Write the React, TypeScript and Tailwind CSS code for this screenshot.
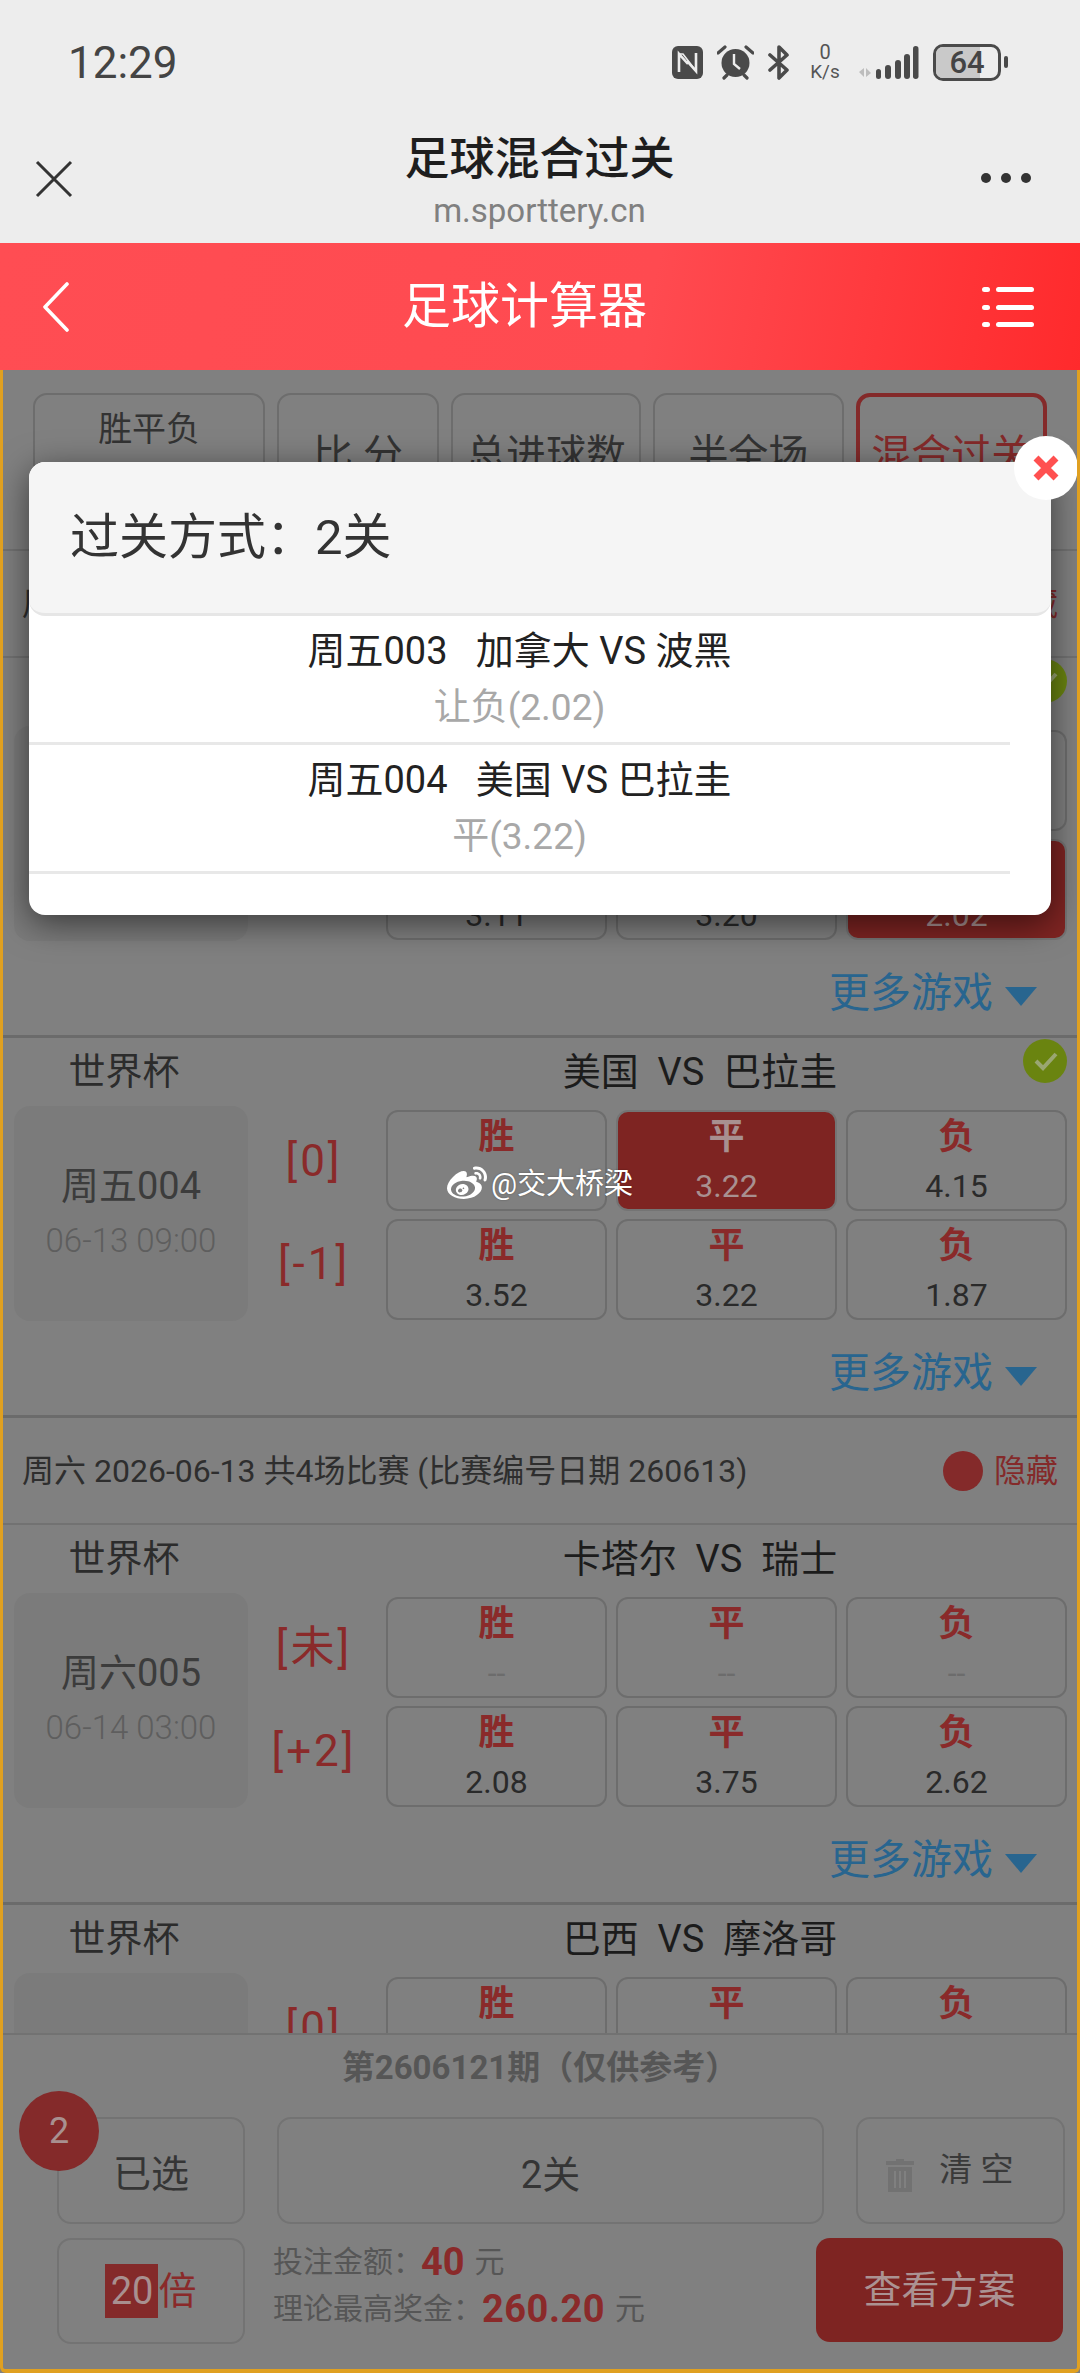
import React from "react";
import { FaWeibo } from "react-icons/fa";

const FONT = "font-['Roboto','Noto_Sans_CJK_SC',sans-serif]";

type Cell = { l: string; v: string; on?: boolean };
type Row = { label: string; cells: Cell[] };
type Match = { code: string; time: string; teams: string; rows: Row[]; checked?: boolean };

const tri = (a: string, b: string, c: string, sel = -1): Cell[] => [
  { l: "胜", v: a, on: sel === 0 },
  { l: "平", v: b, on: sel === 1 },
  { l: "负", v: c, on: sel === 2 },
];

const m1: Match = {
  code: "",
  time: "",
  teams: "加拿大  VS  波黑",
  checked: true,
  rows: [
    { label: "", cells: tri("", "", "") },
    { label: "", cells: tri("3.11", "3.20", "2.02", 2) },
  ],
};
const m2: Match = {
  code: "周五004",
  time: "06-13 09:00",
  teams: "美国  VS  巴拉圭",
  checked: true,
  rows: [
    { label: "[0]", cells: tri("", "3.22", "4.15", 1) },
    { label: "[-1]", cells: tri("3.52", "3.22", "1.87") },
  ],
};
const m3: Match = {
  code: "周六005",
  time: "06-14 03:00",
  teams: "卡塔尔  VS  瑞士",
  rows: [
    { label: "[未]", cells: tri("--", "--", "--") },
    { label: "[+2]", cells: tri("2.08", "3.75", "2.62") },
  ],
};
const m4: Match = {
  code: "",
  time: "",
  teams: "巴西  VS  摩洛哥",
  rows: [
    { label: "[0]", cells: tri("", "", "") },
    { label: "", cells: tri("", "", "") },
  ],
};

function Nfc() {
  return (
    <svg width="31" height="33" viewBox="0 0 31 33">
      <rect width="31" height="33" rx="6" fill="#4a4a4a" />
      <path d="M7 26V8l9 10 M24 7v18l-9-10" fill="none" stroke="#ededed" strokeWidth="2.6" />
      <path d="M7 8h4l13 17" fill="none" stroke="#ededed" strokeWidth="1.6" />
    </svg>
  );
}
function Alarm() {
  return (
    <svg width="37" height="35" viewBox="0 0 37 35">
      <circle cx="18.5" cy="18" r="14" fill="#4a4a4a" />
      <path d="M17 9v10l6 5" fill="none" stroke="#ededed" strokeWidth="2.4" />
      <path d="M1 8l7-6 M36 8l-7-6 M7 33l3-3 M30 33l-3-3" stroke="#4a4a4a" strokeWidth="3.2" strokeLinecap="round" />
    </svg>
  );
}
function Bluetooth() {
  return (
    <svg width="22" height="35" viewBox="0 0 22 35">
      <path d="M2 10l17 15-8 8V2l8 8L2 25" fill="none" stroke="#4a4a4a" strokeWidth="3.6" strokeLinejoin="round" strokeLinecap="round" />
    </svg>
  );
}
function Signal() {
  return (
    <svg width="62" height="35" viewBox="0 0 62 35">
      <path d="M2 27l5-4v9z M9 23l5 5-5 4z" fill="#bdbdbd" />
      <rect x="19" y="24" width="5" height="10" rx="2.5" fill="#4a4a4a" />
      <rect x="28" y="20" width="6" height="14" rx="3" fill="#4a4a4a" />
      <rect x="38" y="15" width="6" height="19" rx="3" fill="#4a4a4a" />
      <rect x="47" y="9" width="6" height="25" rx="3" fill="#4a4a4a" />
      <rect x="56" y="1" width="5.5" height="33" rx="2.7" fill="#4a4a4a" />
    </svg>
  );
}
function Battery() {
  return (
    <div className="flex items-center gap-[3px]">
      <div className="relative flex h-[37px] w-[68px] items-center justify-center overflow-hidden rounded-[10px] border-[3px] border-[#4a4a4a]">
        <div className="absolute inset-y-0 left-0 w-[44px] bg-[#c9c9c9]" />
        <span className="relative text-[31px] font-medium leading-none text-[#444]">64</span>
      </div>
      <div className="h-[12px] w-[4px] rounded-full bg-[#4a4a4a]" />
    </div>
  );
}

function BrowserBar() {
  return (
    <div className="relative h-[243px] shrink-0 bg-[#ededed]">
      <div className="flex h-[124px] items-center pl-[68px] pr-[72px]">
        <span className="mt-[2px] text-[44px] leading-none text-[#444]">12:29</span>
        <div className="ml-auto flex items-center gap-[14px]">
          <Nfc />
          <Alarm />
          <Bluetooth />
          <div className="ml-[3px] flex w-[36px] flex-col items-center text-[#555]">
            <span className="text-[20px] leading-[20px]">0</span>
            <span className="text-[19px] leading-[20px]">K/s</span>
          </div>
          <Signal />
          <Battery />
        </div>
      </div>
      <div className="flex items-start pl-[35px] pr-[49px]">
        <svg width="38" height="38" viewBox="0 0 38 38" className="mt-[36px]">
          <path d="M2 2l34 34 M36 2L2 36" stroke="#333" strokeWidth="3" />
        </svg>
        <div className="flex flex-1 flex-col items-center pl-[25px]">
          <span className="mt-[11px] text-[45px] font-medium leading-[50px] text-[#1e1e1e]">足球混合过关</span>
          <span className="mt-[4px] text-[33px] leading-[44px] text-[#808080]">m.sporttery.cn</span>
        </div>
        <div className="mt-[49px] flex w-[50px] justify-between">
          <i className="h-[10px] w-[10px] rounded-full bg-[#333]" />
          <i className="h-[10px] w-[10px] rounded-full bg-[#333]" />
          <i className="h-[10px] w-[10px] rounded-full bg-[#333]" />
        </div>
      </div>
    </div>
  );
}

function RedBar() {
  return (
    <div className="flex h-[127px] shrink-0 items-center bg-[linear-gradient(100deg,#ff4d53_0%,#ff4a50_60%,#ff2a2c_100%)] pl-[42px] pr-[46px]">
      <svg width="28" height="50" viewBox="0 0 28 50">
        <path d="M25 2L3 25l22 23" fill="none" stroke="#fff" strokeWidth="3.6" strokeLinecap="round" strokeLinejoin="round" />
      </svg>
      <span className="flex-1 pr-[3px] text-center text-[49px] font-normal leading-none text-white">足球计算器</span>
      <svg width="52" height="44" viewBox="0 0 52 44">
        <g fill="#fff">
          <rect x="0" y="2" width="8" height="5" rx="2.5" />
          <rect x="14" y="2" width="38" height="5" rx="2.5" />
          <rect x="0" y="20" width="8" height="5" rx="2.5" />
          <rect x="14" y="20" width="38" height="5" rx="2.5" />
          <rect x="0" y="37" width="8" height="5" rx="2.5" />
          <rect x="14" y="37" width="38" height="5" rx="2.5" />
        </g>
      </svg>
    </div>
  );
}

function Tabs() {
  const base = "flex h-[143px] flex-col items-center rounded-[14px] border-2 border-[#6d6d6d] text-[#333]";
  return (
    <div className="flex h-[181px] gap-[12px] border-b-2 border-[#727272] pl-[33px] pr-[33px] pt-[23px]">
      <div className={`${base} w-[233px] pt-[14px] text-[34px] leading-[40px]`}>胜平负</div>
      <div className={`${base} w-[162px] pt-[38px] text-[40px] leading-[44px]`}>比 分</div>
      <div className={`${base} w-[191px] pt-[38px] text-[40px] leading-[44px]`}>总进球数</div>
      <div className={`${base} w-[191px] pt-[38px] text-[40px] leading-[44px]`}>半全场</div>
      <div className="flex h-[143px] w-[192px] flex-col items-center rounded-[14px] border-[4px] border-[#842a2a] pt-[36px] text-[40px] leading-[44px] text-[#842a2a]">混合过关</div>
    </div>
  );
}

function DayHeader({ text }: { text: string }) {
  return (
    <div className="flex h-[107px] items-center border-b-2 border-[#727272] pl-[22px] pr-[22px]">
      <span className="text-[32px] leading-none text-[#2e2e2e]">{text}</span>
      <span className="ml-auto h-[40px] w-[40px] rounded-full bg-[#842a2a]" />
      <span className="ml-[11px] text-[32px] leading-none text-[#842a2a]">隐藏</span>
    </div>
  );
}

function OddsCell({ c }: { c: Cell }) {
  const box = c.on ? "bg-[#7e2422] border-[#747474]" : "border-[#6d6d6d]";
  const lab = c.on ? "text-[#a89090]" : "text-[#8a2a2a]";
  const val = c.on ? "text-[#a89090]" : c.v === "--" ? "text-[#6c6c6c]" : "text-[#2a2a2a]";
  return (
    <div className={`flex flex-col items-center rounded-[12px] border-2 pt-[7px] ${box}`}>
      <span className={`text-[36px] font-bold leading-[36px] ${lab}`}>{c.l}</span>
      <span className={`mt-[15px] h-[32px] text-[32px] leading-[32px] ${val}`}>{c.v}</span>
    </div>
  );
}

function MatchBlock({ m }: { m: Match }) {
  return (
    <div className="relative h-[380px] border-b-[3px] border-[#6b6b6b]">
      <div className="flex h-[68px] items-center">
        <span className="w-[248px] text-center text-[37px] leading-none text-[#2c2c2c]">世界杯</span>
        <span className="ml-[72px] flex-1 whitespace-pre text-center text-[38px] leading-none text-[#1c1c1c]">{m.teams}</span>
      </div>
      {m.checked && (
        <svg width="44" height="44" viewBox="0 0 44 44" className="absolute right-[13px] top-[1px]">
          <circle cx="22" cy="22" r="22" fill="#6a8410" />
          <path d="M13 22l7 7 13-14" fill="none" stroke="#9aa672" strokeWidth="4" />
        </svg>
      )}
      <div className="flex pl-[14px]">
        <div className="flex h-[215px] w-[234px] flex-col items-center rounded-[16px] bg-[#7b7b7b] pt-[60px]">
          <span className="h-[40px] text-[38px] leading-[40px] text-[#3c3c3c]">{m.code}</span>
          <span className="mt-[16px] text-[33px] font-light leading-[38px] text-[#5e5e5e]">{m.time}</span>
        </div>
        <div className="flex w-[138px] flex-col pt-[4px] text-[44px] leading-none tracking-[3px] text-[#8a2a2a]">
          <div className="flex h-[101px] items-center justify-center pr-[6px]">{m.rows[0].label}</div>
          <div className="flex h-[100px] items-center justify-center pr-[6px] pt-[6px]">{m.rows[1].label}</div>
        </div>
        <div className="mt-[4px] grid h-[210px] w-[681px] grid-cols-3 grid-rows-2 gap-x-[9px] gap-y-[8px]">
          {m.rows.flatMap((r) => r.cells).map((c, i) => (
            <OddsCell key={i} c={c} />
          ))}
        </div>
      </div>
      <div className="mt-[32px] flex h-[40px] items-center justify-end gap-[12px] pr-[43px]">
        <span className="text-[41px] leading-none text-[#28658f]">更多游戏</span>
        <span className="mt-[6px] h-0 w-0 border-x-[16px] border-t-[19px] border-x-transparent border-t-[#28658f]" />
      </div>
    </div>
  );
}

function Footer() {
  const box = "rounded-[14px] border-2 border-[#737373] flex items-center justify-center";
  return (
    <div className="absolute inset-x-0 bottom-0 h-[340px] border-t-2 border-[#727272] bg-[#808080] pl-[57px] pr-[15px]">
      <div className="flex h-[64px] items-center justify-center pr-[42px] text-[33px] font-bold leading-none text-[#565656]">
        第2606121期（仅供参考）
      </div>
      <div className="mt-[18px] flex h-[107px]">
        <div className={`${box} w-[188px] text-[38px] text-[#353535]`}>
          <span className="mt-[8px]">已选</span>
        </div>
        <div className={`${box} ml-[32px] w-[548px] text-[38px] text-[#353535]`}>
          <span className="mt-[10px]">2关</span>
        </div>
        <div className={`${box} ml-[32px] w-[209px] !justify-start gap-[25px] pl-[28px]`}>
          <svg width="28" height="34" viewBox="0 0 28 34" className="mt-[8px]">
            <path d="M10 3V1h8v2h10v4H0V3z M2 9h24v25H2z" fill="#727272" />
            <path d="M9 13v17 M14 13v17 M19 13v17" stroke="#808080" strokeWidth="2" />
          </svg>
          <span className="-mt-[3px] whitespace-pre text-[33px] leading-none text-[#3a3a3a]">清 空</span>
        </div>
      </div>
      <div className="mt-[14px] flex h-[106px]">
        <div className={`${box} w-[188px] text-[38px] leading-none text-[#8a2a2a]`}>
          <span className="flex h-[54px] w-[53px] items-center justify-center bg-[#842a2a] text-[#a89090]">20</span>
          <span>倍</span>
        </div>
        <div className="ml-[28px] -mt-[11px] flex flex-1 flex-col justify-center text-[30px] leading-none text-[#565656]">
          <div className="flex h-[47px] items-center">
            投注金额：
            <b className="-ml-[2px] text-[38px] font-bold text-[#8a2a2a]">40</b>
            <span className="ml-[10px]">元</span>
          </div>
          <div className="flex h-[47px] items-center">
            理论最高奖金：
            <b className="-ml-[1px] text-[38px] font-bold tracking-[0.5px] text-[#8a2a2a]">260.20</b>
            <span className="ml-[10px]">元</span>
          </div>
        </div>
        <div className="mr-[2px] flex h-[104px] w-[247px] items-center justify-center rounded-[14px] bg-[#7e2422] text-[38px] leading-none text-[#ab9292]">
          查看方案
        </div>
      </div>
      <div className="absolute left-[19px] top-[56px] flex h-[80px] w-[80px] items-center justify-center rounded-full bg-[#842a2a] text-[36px] leading-none text-[#a89090]">
        2
      </div>
    </div>
  );
}

function SlipRow({ head, sub }: { head: string; sub: string }) {
  return (
    <div className="flex h-[129px] flex-col items-center border-b-[3px] border-[#e8e8e8] pt-[13px]">
      <span className="whitespace-pre text-[38px] leading-[44px] text-[#222]">{head}</span>
      <span className="mt-[13px] text-[37px] leading-[44px] text-[#a8a8a8]">{sub}</span>
    </div>
  );
}

function Modal() {
  return (
    <div className="absolute left-[29px] top-[92px] h-[453px] w-[1022px] rounded-[16px] bg-white shadow-[0_8px_34px_rgba(0,0,0,0.55)]">
      <div className="flex h-[154px] items-start rounded-[16px] border-b-[3px] border-[#e6e6e6] bg-[#f5f5f5] pl-[41px] pt-[48px] text-[49px] leading-[56px] text-[#333]">
        过关方式：2关
      </div>
      <div className="w-[981px]">
        <SlipRow head="周五003   加拿大 VS 波黑" sub="让负(2.02)" />
        <SlipRow head="周五004   美国 VS 巴拉圭" sub="平(3.22)" />
      </div>
      <div className="absolute -right-[27px] -top-[26px] flex h-[64px] w-[64px] items-center justify-center rounded-full bg-white">
        <svg width="28" height="28" viewBox="0 0 28 28">
          <path d="M4 4l20 20 M24 4L4 24" stroke="#ff5050" strokeWidth="7" />
        </svg>
      </div>
    </div>
  );
}

export default function App() {
  return (
    <div className={`relative flex h-[2373px] w-[1080px] flex-col overflow-hidden bg-[#808080] ${FONT}`}>
      <BrowserBar />
      <RedBar />
      <div className="relative flex-1 overflow-hidden">
        <Tabs />
        <DayHeader text="周五 2026-06-12 共4场比赛 (比赛编号日期 260612)" />
        <MatchBlock m={m1} />
        <MatchBlock m={m2} />
        <DayHeader text="周六 2026-06-13 共4场比赛 (比赛编号日期 260613)" />
        <MatchBlock m={m3} />
        <MatchBlock m={m4} />
        <Footer />
        <Modal />
        <div className="pointer-events-none absolute inset-0 rounded-b-[6px] border-x-[3px] border-b-[4px] border-[#e0a020]" />
      </div>
      <div className="absolute left-[447px] top-[1164px] flex items-center gap-[4px] text-white [text-shadow:0_0_2px_rgba(0,0,0,0.35)]">
        <FaWeibo size={40} />
        <span className="text-[29px] leading-none">@交大桥梁</span>
      </div>
    </div>
  );
}
